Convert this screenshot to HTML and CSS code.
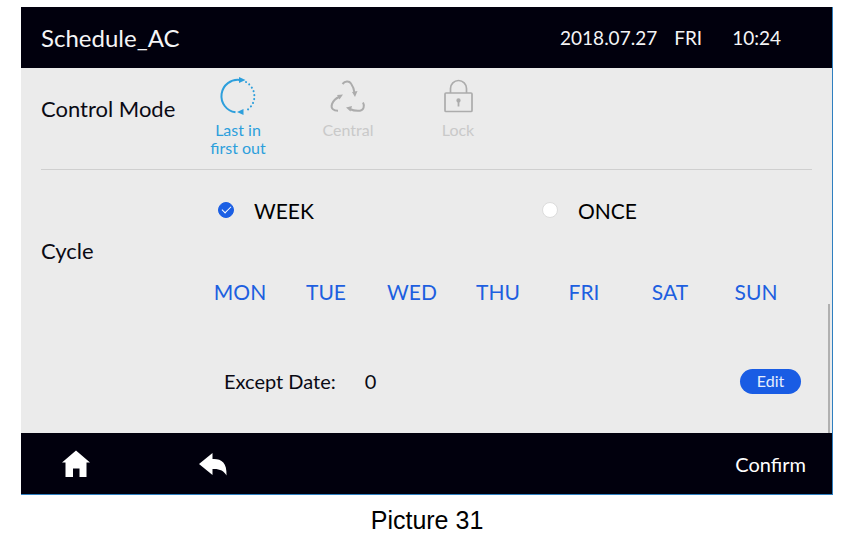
FILE: index.html
```html
<!DOCTYPE html>
<html lang="en">
<head>
<meta charset="utf-8">
<title>Schedule_AC</title>
<meta name="viewport" content="width=device-width, initial-scale=1">
<link rel="stylesheet" href="styles.css">
</head>
<body>
<figure class="picture">
  <div class="screen">
    <header class="topbar">
      <h1>Schedule_AC</h1>
      <div class="clock">
        <span class="date">2018.07.27</span>
        <span class="day">FRI</span>
        <span class="time">10:24</span>
      </div>
    </header>

    <main class="content">
      <section class="row control">
        <h2>Control Mode</h2>
        <div class="modes">
          <button type="button" class="mode active">
            <svg width="40" height="40" viewBox="0 0 40 40" fill="none" stroke="currentColor">
              <path d="M22 4A16.300 16.300 0 1 0 17.500 36.300" stroke-width="2"/>
              <path d="M28 6A16.500 16.500 0 0 1 27.500 35" stroke-width="2" stroke-dasharray="0.100 3.900" stroke-linecap="round"/>
              <path d="M21 1l6.500 3-6.500 3zM25.500 33l-6.500 3 6.500 3z" fill="currentColor" stroke="none"/>
            </svg>
            <span>Last in<br>first out</span>
          </button>
          <button type="button" class="mode">
            <svg width="40" height="40" viewBox="0 0 40 40" fill="none" stroke="currentColor" stroke-width="2">
              <path d="M14.500 8C17 5 21 4.500 23 7.500C25.500 11 26 13 26.500 17"/>
              <path d="M10 34.800C5.500 34.800 2.500 32.500 4 28C5.500 24.500 7.500 22.500 11 21"/>
              <path d="M35 26.500C37 30 35.500 34.300 32 34.700C28 35.200 25 34.500 21.500 33"/>
              <path d="M24 16l5.500-1-2.500 6zM9 19l6-.5-3.500 5zM24 30l-6 1.500 4.500 4z" fill="currentColor" stroke="none"/>
            </svg>
            <span>Central</span>
          </button>
          <button type="button" class="mode">
            <svg width="40" height="40" viewBox="0 0 40 40" fill="none" stroke="currentColor" stroke-width="1.700">
              <rect x="7" y="17" width="27" height="18.500" rx="1"/>
              <path d="M12.500 17v-4.500a8 8 0 0 1 16 0V17"/>
              <path d="M20.500 24v6.500" stroke-width="1.800"/>
              <circle cx="20.500" cy="24.500" r="1.300" fill="currentColor"/>
            </svg>
            <span>Lock</span>
          </button>
        </div>
      </section>

      <section class="row cycle">
        <h2>Cycle</h2>
        <div>
          <div class="repeat">
            <label><input type="radio" name="repeat" checked>WEEK</label>
            <label><input type="radio" name="repeat">ONCE</label>
          </div>
          <div class="days">
            <button type="button">MON</button>
            <button type="button">TUE</button>
            <button type="button">WED</button>
            <button type="button">THU</button>
            <button type="button">FRI</button>
            <button type="button">SAT</button>
            <button type="button">SUN</button>
          </div>
        </div>
      </section>

      <section class="except">
        <span>Except Date:</span>
        <span class="count">0</span>
        <button type="button" class="edit">Edit</button>
      </section>
      <div class="scrollbar"></div>
    </main>

    <footer class="bottombar">
      <button type="button" class="home" aria-label="Home">
        <svg width="28" height="28" viewBox="0 0 28 28" fill="currentColor">
          <path d="M14 0.500L28 12.500H24.500V27H17.500V18.500H11V27H3.500V12.500H0z"/>
        </svg>
      </button>
      <button type="button" aria-label="Back">
        <svg width="28" height="28" viewBox="0 0 28 28" fill="currentColor">
          <path d="M0 14L13.500 3V9C22 8.500 28 12 27.500 25.500C25 20.500 20 18.500 13.500 19V25z"/>
        </svg>
      </button>
      <button type="button" class="confirm">Confirm</button>
    </footer>
  </div>
  <figcaption>Picture 31</figcaption>
</figure>
</body>
</html>
```
FILE: styles.css
```css
body {
  margin: 0;
  background: #fff;
  color: #0a0a14;
  font-family: Lato, "Open Sans", sans-serif;
}

button {
  padding: 0;
  border: 0;
  background: none;
  color: inherit;
  font: inherit;
  cursor: pointer;
}

svg {
  display: block;
}

.picture {
  margin: 7px 11px 0 21px;
}

.picture figcaption {
  padding-top: 10px;
  color: #000;
  font: 25px/30px "Liberation Sans", Arial, sans-serif;
  text-align: center;
}

.screen {
  border-right: 1px solid #2e7fc0;
  border-bottom: 1px solid #2e7fc0;
}

.topbar,
.bottombar {
  display: flex;
  align-items: center;
  height: 61px;
  padding: 0 20px;
  background: #01000d;
  color: #f4f4f6;
}

.topbar h1 {
  margin: 0;
  font-size: 24px;
  font-weight: normal;
}

.clock {
  display: flex;
  margin-left: auto;
  padding-right: 31px;
  font-size: 19px;
}

.day {
  margin-left: 17px;
}

.time {
  margin-left: 30px;
}

/* settings */
.content {
  position: relative;
  background: #ebebeb;
}

.row {
  display: grid;
  grid-template-columns: 142px 1fr;
  margin: 0 20px;
}

.row h2 {
  margin: 0;
  font-size: 22px;
  line-height: 28px;
  font-weight: normal;
  white-space: nowrap;
}

.control {
  min-height: 101px;
  border-bottom: 1px solid #cfcfcf;
}

.control h2 {
  padding-top: 27px;
}

.modes {
  display: flex;
  align-items: flex-start;
  padding-top: 8px;
}

.mode {
  display: flex;
  flex-direction: column;
  align-items: center;
  gap: 5px;
  width: 110px;
  color: #c9c9c9;
  font-size: 16px;
  line-height: 18px;
}

.mode svg {
  color: #acacac;
}

.mode.active,
.mode.active svg {
  color: #2d9fdc;
}

.cycle {
  align-items: center;
}

.repeat {
  display: grid;
  grid-template-columns: 6fr 5fr;
  padding-left: 35px;
}

.repeat label {
  display: flex;
  align-items: center;
  gap: 20px;
  height: 80px;
  color: #000;
  font-size: 21px;
}

.repeat input {
  appearance: none;
  display: grid;
  place-items: center;
  width: 16px;
  height: 16px;
  margin: 0;
  border: 1px solid #dcdcdc;
  border-radius: 50%;
  background: #fff;
}

.repeat input:checked {
  border-color: #1b5fe4;
  background: #1b5fe4;
}

.repeat input:checked::after {
  content: "";
  width: 8px;
  height: 4px;
  margin-bottom: 3px;
  border: solid #fff;
  border-width: 0 0 1px 1px;
  transform: rotate(-45deg);
}

.days {
  display: grid;
  grid-template-columns: repeat(7, 1fr);
  padding: 0 13px 0 14px;
}

.days button {
  height: 82px;
  color: #1d5fe0;
  font-size: 21px;
}

.except {
  display: flex;
  align-items: center;
  height: 98px;
  padding: 0 31px 3px 203px;
  font-size: 20px;
}

.count {
  margin-left: 29px;
}

.edit {
  width: 61px;
  height: 25px;
  margin-left: auto;
  border-radius: 13px;
  background: #195ce4;
  color: #e6eefc;
  font-size: 16px;
  line-height: 24px;
}

.scrollbar {
  position: absolute;
  right: 2px;
  bottom: 0;
  width: 2px;
  height: 129px;
  background: #b0b0b0;
}

.bottombar {
  color: #fff;
}

.home {
  margin: 0 109px 0 21px;
}

.confirm {
  margin-left: auto;
  padding-right: 6px;
  font-size: 20px;
}
```
